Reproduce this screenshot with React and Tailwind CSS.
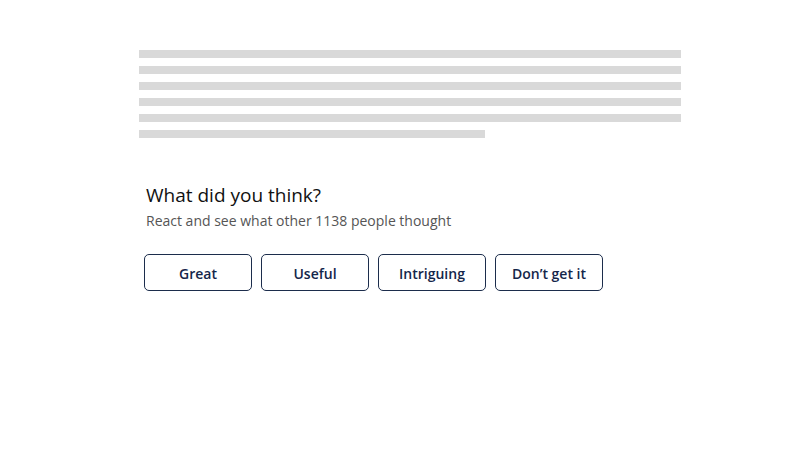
import React from 'react';

const bars = [542, 542, 542, 542, 542, 346];
const reactions = ['Great', 'Useful', 'Intriguing', 'Don’t get it'];

const App = () => {
    return (
        <div className="w-[800px] h-[470px] bg-white" style={{ fontFamily: '"Open Sans", sans-serif' }}>
            <div className="pl-[139px] pt-[50px]">
                {/* Placeholder article lines */}
                <div className="flex flex-col gap-[8px]">
                    {bars.map((w, i) => (
                        <div key={i} className="h-[8px] bg-[#d9d9d9]" style={{ width: w }} />
                    ))}
                </div>

                <div className="pl-[5px] pt-[43px]">
                    <div className="pl-[2px]">
                        <h3 className="text-[19px] leading-[28px] text-[#111] font-normal">What did you think?</h3>
                        <p className="mt-[2px] text-[14px] leading-[20px] text-[#555]">
                            React and see what other 1138 people thought
                        </p>
                    </div>
                    <div className="mt-[23px] flex gap-[9px]">
                        {reactions.map(r => (
                            <button
                                key={r}
                                className="w-[108px] h-[37px] pt-[1px] border border-[#1c2d4c] rounded-[5px] text-[14px] font-semibold text-[#14264a] bg-white"
                            >
                                {r}
                            </button>
                        ))}
                    </div>
                </div>
            </div>
        </div>
    );
};

export default App;
